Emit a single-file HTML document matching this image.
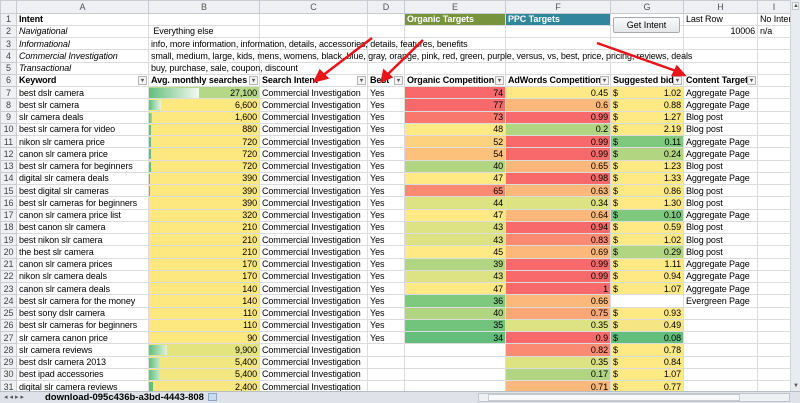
<!DOCTYPE html>
<html><head><meta charset="utf-8"><style>
*{margin:0;padding:0;box-sizing:border-box}
body{width:800px;height:403px;overflow:hidden;background:#fff;font-family:"Liberation Sans",Arial,sans-serif;font-size:9px;color:#000;position:relative}
table{position:absolute;left:0;top:0;border-collapse:collapse;table-layout:fixed;width:790px}
td{height:12.25px;border:1px solid #dadcdd;white-space:nowrap;padding:0 2px;line-height:10px;overflow:visible;letter-spacing:-0.1px}
tr.h td{height:12.5px;background:#eef0f3;color:#555;text-align:center;border-color:#c8cbcf}
td.n{background:#eef0f3;color:#444;text-align:center;padding:0;border-color:#c8cbcf}
.b{font-weight:bold}.i{font-style:italic}.r{text-align:right}
td.I{overflow:hidden}
.dd{position:relative}
.dd i{position:absolute;right:1px;top:1px;width:9px;height:9px;border:1px solid #b5b5b5;background:#f4f4f4;font-style:normal;font-size:6px;line-height:8px;text-align:center;color:#555}
.d{float:left}
.R{background:#f8696b}.R2{background:#fa8a72}.O{background:#fcb87a}.O2{background:#fdd27f}.Y{background:#ffe984}.YG{background:#dde282}.LG{background:#b1d580}.G{background:#7ec97d}.DG{background:#63be7b}
.BY{background:#fde77f}
.sv{position:absolute;left:790px;top:0;width:10px;height:392px;background:#e8ebef;border-left:1px solid #cfd3d8}
.bot{position:absolute;left:0;top:391px;width:800px;height:12px;background:#dfe3e9;border-top:1px solid #b8bec6}
</style></head><body>
<table>
<colgroup><col style="width:16px"><col style="width:132px"><col style="width:111px"><col style="width:108px"><col style="width:37px"><col style="width:101px"><col style="width:105px"><col style="width:73px"><col style="width:74px"><col style="width:33px"></colgroup>
<tr class="h"><td></td><td>A</td><td>B</td><td>C</td><td>D</td><td>E</td><td>F</td><td>G</td><td>H</td><td>I</td></tr>
<tr><td class="n">1</td><td class="b">Intent</td><td></td><td></td><td></td><td class="b" style="background:#77933c;color:#fff">Organic Targets</td><td class="b" style="background:#31859c;color:#fff">PPC Targets</td><td></td><td>Last Row</td><td class="I">No Inter</td></tr>
<tr><td class="n">2</td><td class="i">Navigational</td><td>&nbsp;Everything else</td><td></td><td></td><td></td><td></td><td></td><td class="r">10006</td><td class="I">n/a</td></tr>
<tr><td class="n">3</td><td class="i">Informational</td><td>info, more information, information, details, accessories, details, features, benefits</td><td></td><td></td><td></td><td></td><td></td><td></td><td></td></tr>
<tr><td class="n">4</td><td class="i">Commercial Investigation</td><td>small, medium, large, kids, mens, womens, black, blue, gray, orange, pink, red, green, purple, versus, vs, best, price, pricing, reviews, deals</td><td></td><td></td><td></td><td></td><td></td><td></td><td></td></tr>
<tr><td class="n">5</td><td class="i">Transactional</td><td>buy, purchase, sale, coupon, discount</td><td></td><td></td><td></td><td></td><td></td><td></td><td></td></tr>
<tr class="b"><td class="n" style="font-weight:normal">6</td><td class="dd">Keyword<i>▾</i></td><td class="dd">Avg. monthly searches<i>▾</i></td><td class="dd">Search Intent<i>▾</i></td><td class="dd">Best<i>▾</i></td><td class="dd">Organic Competition<i>▾</i></td><td class="dd">AdWords Competition<i>▾</i></td><td class="dd">Suggested bid<i>▾</i></td><td class="dd">Content Target<i>▾</i></td><td></td></tr>
<tr><td class="n">7</td><td>best dslr camera</td><td class="r" style="background:linear-gradient(90deg,#63be7b,#f4faf2) 0 1px/50px 10px no-repeat,#b5d886">27,100</td><td>Commercial Investigation</td><td>Yes</td><td class="r R">74</td><td class="r Y">0.45</td><td class="r Y"><span class="d">$</span>1.02</td><td>Aggregate Page</td><td></td></tr>
<tr><td class="n">8</td><td>best slr camera</td><td class="r" style="background:linear-gradient(90deg,#63be7b,#e8f5e6) 0 1px/12px 10px no-repeat,#fde77f">6,600</td><td>Commercial Investigation</td><td>Yes</td><td class="r R">77</td><td class="r O">0.6</td><td class="r Y"><span class="d">$</span>0.88</td><td>Aggregate Page</td><td></td></tr>
<tr><td class="n">9</td><td>slr camera deals</td><td class="r" style="background:linear-gradient(90deg,#63be7b,#9fd8a8) 0 1px/3px 10px no-repeat,#fde77f">1,600</td><td>Commercial Investigation</td><td>Yes</td><td class="r" style="background:#f9786e">73</td><td class="r R">0.99</td><td class="r Y"><span class="d">$</span>1.27</td><td>Blog post</td><td></td></tr>
<tr><td class="n">10</td><td>best slr camera for video</td><td class="r" style="background:linear-gradient(#63be7b,#63be7b) 0 1px/2px 10px no-repeat,#fde77f">880</td><td>Commercial Investigation</td><td>Yes</td><td class="r Y">48</td><td class="r LG">0.2</td><td class="r Y"><span class="d">$</span>2.19</td><td>Blog post</td><td></td></tr>
<tr><td class="n">11</td><td>nikon slr camera price</td><td class="r" style="background:linear-gradient(#63be7b,#63be7b) 0 1px/2px 10px no-repeat,#fde77f">720</td><td>Commercial Investigation</td><td>Yes</td><td class="r O2">52</td><td class="r R">0.99</td><td class="r G"><span class="d">$</span>0.11</td><td>Aggregate Page</td><td></td></tr>
<tr><td class="n">12</td><td>canon slr camera price</td><td class="r" style="background:linear-gradient(#63be7b,#63be7b) 0 1px/2px 10px no-repeat,#fde77f">720</td><td>Commercial Investigation</td><td>Yes</td><td class="r" style="background:#fcc27c">54</td><td class="r R">0.99</td><td class="r LG"><span class="d">$</span>0.24</td><td>Aggregate Page</td><td></td></tr>
<tr><td class="n">13</td><td>best slr camera for beginners</td><td class="r" style="background:linear-gradient(#63be7b,#63be7b) 0 1px/2px 10px no-repeat,#fde77f">720</td><td>Commercial Investigation</td><td>Yes</td><td class="r LG">40</td><td class="r O">0.65</td><td class="r Y"><span class="d">$</span>1.23</td><td>Blog post</td><td></td></tr>
<tr><td class="n">14</td><td>digital slr camera deals</td><td class="r" style="background:linear-gradient(#63be7b,#63be7b) 0 1px/1px 10px no-repeat,#fde77f">390</td><td>Commercial Investigation</td><td>Yes</td><td class="r Y">47</td><td class="r R">0.98</td><td class="r Y"><span class="d">$</span>1.33</td><td>Aggregate Page</td><td></td></tr>
<tr><td class="n">15</td><td>best digital slr cameras</td><td class="r" style="background:linear-gradient(#63be7b,#63be7b) 0 1px/1px 10px no-repeat,#fde77f">390</td><td>Commercial Investigation</td><td>Yes</td><td class="r R2">65</td><td class="r O">0.63</td><td class="r Y"><span class="d">$</span>0.86</td><td>Blog post</td><td></td></tr>
<tr><td class="n">16</td><td>best slr cameras for beginners</td><td class="r BY">390</td><td>Commercial Investigation</td><td>Yes</td><td class="r YG">44</td><td class="r YG">0.34</td><td class="r Y"><span class="d">$</span>1.30</td><td>Blog post</td><td></td></tr>
<tr><td class="n">17</td><td>canon slr camera price list</td><td class="r BY">320</td><td>Commercial Investigation</td><td>Yes</td><td class="r Y">47</td><td class="r O">0.64</td><td class="r G"><span class="d">$</span>0.10</td><td>Aggregate Page</td><td></td></tr>
<tr><td class="n">18</td><td>best canon slr camera</td><td class="r BY">210</td><td>Commercial Investigation</td><td>Yes</td><td class="r YG">43</td><td class="r R">0.94</td><td class="r Y"><span class="d">$</span>0.59</td><td>Blog post</td><td></td></tr>
<tr><td class="n">19</td><td>best nikon slr camera</td><td class="r BY">210</td><td>Commercial Investigation</td><td>Yes</td><td class="r YG">43</td><td class="r R2">0.83</td><td class="r Y"><span class="d">$</span>1.02</td><td>Blog post</td><td></td></tr>
<tr><td class="n">20</td><td>the best slr camera</td><td class="r BY">210</td><td>Commercial Investigation</td><td>Yes</td><td class="r Y">45</td><td class="r O">0.69</td><td class="r LG"><span class="d">$</span>0.29</td><td>Blog post</td><td></td></tr>
<tr><td class="n">21</td><td>canon slr camera prices</td><td class="r BY">170</td><td>Commercial Investigation</td><td>Yes</td><td class="r LG">39</td><td class="r R">0.99</td><td class="r Y"><span class="d">$</span>1.11</td><td>Aggregate Page</td><td></td></tr>
<tr><td class="n">22</td><td>nikon slr camera deals</td><td class="r BY">170</td><td>Commercial Investigation</td><td>Yes</td><td class="r YG">43</td><td class="r R">0.99</td><td class="r Y"><span class="d">$</span>0.94</td><td>Aggregate Page</td><td></td></tr>
<tr><td class="n">23</td><td>canon slr camera deals</td><td class="r BY">140</td><td>Commercial Investigation</td><td>Yes</td><td class="r Y">47</td><td class="r R">1</td><td class="r Y"><span class="d">$</span>1.07</td><td>Aggregate Page</td><td></td></tr>
<tr><td class="n">24</td><td>best slr camera for the money</td><td class="r BY">140</td><td>Commercial Investigation</td><td>Yes</td><td class="r G">36</td><td class="r O">0.66</td><td></td><td>Evergreen Page</td><td></td></tr>
<tr><td class="n">25</td><td>best sony dslr camera</td><td class="r BY">110</td><td>Commercial Investigation</td><td>Yes</td><td class="r LG">40</td><td class="r" style="background:#fba677">0.75</td><td class="r Y"><span class="d">$</span>0.93</td><td></td><td></td></tr>
<tr><td class="n">26</td><td>best slr cameras for beginners</td><td class="r BY">110</td><td>Commercial Investigation</td><td>Yes</td><td class="r" style="background:#72c37c">35</td><td class="r YG">0.35</td><td class="r" style="background:#f5e583"><span class="d">$</span>0.49</td><td></td><td></td></tr>
<tr><td class="n">27</td><td>slr camera canon price</td><td class="r BY">90</td><td>Commercial Investigation</td><td>Yes</td><td class="r DG">34</td><td class="r R">0.9</td><td class="r DG"><span class="d">$</span>0.08</td><td></td><td></td></tr>
<tr><td class="n">28</td><td>slr camera reviews</td><td class="r" style="background:linear-gradient(90deg,#63be7b,#e0f2dc) 0 1px/18px 10px no-repeat,#e4e47e">9,900</td><td>Commercial Investigation</td><td></td><td></td><td class="r R2">0.82</td><td class="r Y"><span class="d">$</span>0.78</td><td></td><td></td></tr>
<tr><td class="n">29</td><td>best dslr camera 2013</td><td class="r" style="background:linear-gradient(90deg,#63be7b,#c8ead0) 0 1px/11px 10px no-repeat,#f1e680">5,400</td><td>Commercial Investigation</td><td></td><td></td><td class="r YG">0.35</td><td class="r Y"><span class="d">$</span>0.84</td><td></td><td></td></tr>
<tr><td class="n">30</td><td>best ipad accessories</td><td class="r" style="background:linear-gradient(90deg,#63be7b,#c8ead0) 0 1px/11px 10px no-repeat,#f1e680">5,400</td><td>Commercial Investigation</td><td></td><td></td><td class="r LG">0.17</td><td class="r Y"><span class="d">$</span>1.07</td><td></td><td></td></tr>
<tr><td class="n">31</td><td>digital slr camera reviews</td><td class="r" style="background:linear-gradient(#63be7b,#63be7b) 0 1px/4px 10px no-repeat,#f8e780">2,400</td><td>Commercial Investigation</td><td></td><td></td><td class="r O">0.71</td><td class="r Y"><span class="d">$</span>0.77</td><td></td><td></td></tr>
</table>
<div style="position:absolute;left:613px;top:17px;width:67px;height:16px;border:1px solid #a8acb2;border-radius:2px;background:linear-gradient(#fafafa,#e4e6e9);font-size:9px;text-align:center;line-height:14px">Get Intent</div>
<svg style="position:absolute;left:0;top:0" width="800" height="403">
<g stroke="#e8141a" stroke-width="2.5" fill="#e8141a">
<line x1="372" y1="38" x2="322" y2="76"/><polygon points="315,81 320,71 327,78"/>
<line x1="423" y1="40" x2="387" y2="75"/><polygon points="382,81 384,71 391,77"/>
<line x1="597" y1="43" x2="676" y2="71"/><polygon points="684,75 673,75 677,67"/>
</g></svg>
<div class="sv"><div style="margin:2px 1px;width:7px;height:8px;background:#f6f7f8;border:1px solid #c3c7cc;font-size:6px;line-height:6px;text-align:center;color:#555">▲</div><div style="position:absolute;bottom:3px;left:2px;font-size:6px;color:#555">▼</div></div>
<div class="bot">
<span style="position:absolute;left:4px;top:1px;font-size:7px;color:#555;letter-spacing:2px">◂◂▸▸</span>
<span style="position:absolute;left:45px;top:0;font-weight:bold;font-size:9.5px;line-height:11px">download-095c436b-a3bd-4443-808</span>
<span style="position:absolute;left:208px;top:1px;width:9px;height:8px;background:#c9dcef;border:1px solid #8aa7c6"></span>
<div style="position:absolute;left:478px;top:1px;width:312px;height:9px;background:#eef0f3;border:1px solid #c0c5cb"></div>
<div style="position:absolute;left:488px;top:2px;width:252px;height:7px;background:#f8f9fa;border:1px solid #c8ccd1"></div>
</div>
</body></html>
